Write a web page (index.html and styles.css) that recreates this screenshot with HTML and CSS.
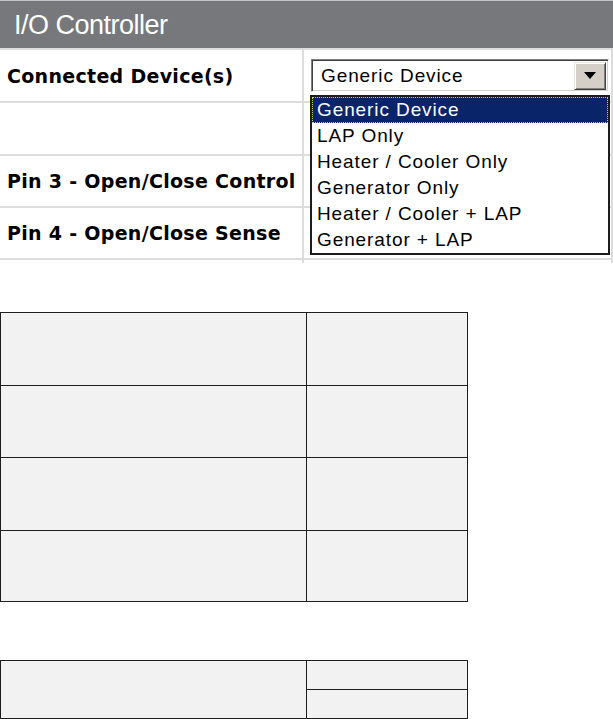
FILE: index.html
```html
<!DOCTYPE html>
<html lang="en">
<head>
  <meta charset="UTF-8" />
  <title>I/O Controller</title>
  <link rel="stylesheet" href="styles.css">
</head>
<body>

  <div class="panel">
    <div class="panel-title">I/O Controller</div>
    <div class="settings">
      <div class="label">Connected Device(s)</div>
      <div class="field">
        <div class="combo">
          <span class="combo-value">Generic Device</span>
          <span class="combo-button"><span class="arrow"></span></span>
          <ul class="combo-list">
            <li class="selected">Generic Device</li>
            <li>LAP Only</li>
            <li>Heater / Cooler Only</li>
            <li>Generator Only</li>
            <li>Heater / Cooler + LAP</li>
            <li>Generator + LAP</li>
          </ul>
        </div>
      </div>
      <div class="label"></div>
      <div class="field"></div>
      <div class="label">Pin 3 - Open/Close Control</div>
      <div class="field"></div>
      <div class="label">Pin 4 - Open/Close Sense</div>
      <div class="field"></div>
      <div class="label"></div>
      <div class="field"></div>
    </div>
  </div>

  <div class="grid-table status">
    <div class="cell"></div><div class="cell"></div>
    <div class="cell"></div><div class="cell"></div>
    <div class="cell"></div><div class="cell"></div>
    <div class="cell"></div><div class="cell"></div>
  </div>

  <div class="grid-table extra">
    <div class="cell tall"></div>
    <div class="cell"></div>
    <div class="cell"></div>
  </div>

</body>
</html>
```

FILE: styles.css
```css
body {
  margin: 0;
  background: #fff;
  font-family: 'Liberation Sans', Arial, sans-serif;
}

.panel-title {
  height: 47px;
  line-height: 49px;
  padding-left: 14px;
  border-top: 1px solid #c4c4c4;
  background: #77787c;
  color: #fff;
  font-size: 27px;
  letter-spacing: -0.5px;
}

.settings {
  display: grid;
  grid-template-columns: 302px 1fr;
  grid-template-rows: 51px 51px 50px 50px 3px;
  gap: 2px;
  padding: 2px 2px 0 0;
  background: #dcdcdc;
}

.label {
  display: flex;
  align-items: center;
  padding-left: 7px;
  background: #fff;
  font-family: 'DejaVu Sans', Verdana, sans-serif;
  font-weight: bold;
  font-size: 19px;
  letter-spacing: 0.3px;
  color: #000;
}

.field {
  display: flex;
  align-items: center;
  padding: 0 2px 0 7px;
  background: #fff;
}

/* classic windows combo box */
.combo {
  position: relative;
  flex: 1;
  height: 33px;
  box-sizing: border-box;
  display: flex;
  align-items: center;
  border: 1px solid;
  border-color: #808080 #fff #fff #808080;
  box-shadow: inset 1px 1px #404040, inset -1px -1px #d4d0c8;
  font-size: 19px;
  letter-spacing: 0.9px;
}

.combo-value {
  flex: 1;
  padding-left: 9px;
}

.combo-button {
  width: 30px;
  height: 26px;
  margin-right: 2px;
  display: flex;
  align-items: center;
  justify-content: center;
  background: #d4d0c8;
  border: 1px solid;
  border-color: #e8e6e0 #404040 #404040 #e8e6e0;
  box-shadow: inset 1px 1px #fff, inset -1px -1px #808080;
}

.arrow {
  width: 0;
  height: 0;
  border-left: 6px solid transparent;
  border-right: 6px solid transparent;
  border-top: 7px solid #000;
}

.combo-list {
  position: absolute;
  top: calc(100% + 4px);
  left: -2px;
  right: -2px;
  margin: 0;
  padding: 0;
  list-style: none;
  background: #fff;
  border: 2px solid #1c1c1c;
}

.combo-list li {
  height: 26px;
  line-height: 26px;
  padding-left: 5px;
  color: #000;
  white-space: nowrap;
}

.combo-list .selected {
  height: 24px;
  line-height: 24px;
  padding-left: 4px;
  background: #0a246a;
  color: #fff;
  border: 1px dotted #d6c98e;
}

.grid-table {
  display: grid;
  width: 468px;
  box-sizing: border-box;
  grid-template-columns: 305px 1fr;
  gap: 1px;
  padding: 1px;
  background: #1e1e1e;
}

.status {
  margin-top: 49px;
  grid-template-rows: 72px 71px 72px 70px;
}

.extra {
  margin-top: 58px;
  grid-template-rows: 28px 28px;
}

.cell {
  background: #f2f2f2;
}

.tall {
  grid-row: span 2;
}
```
